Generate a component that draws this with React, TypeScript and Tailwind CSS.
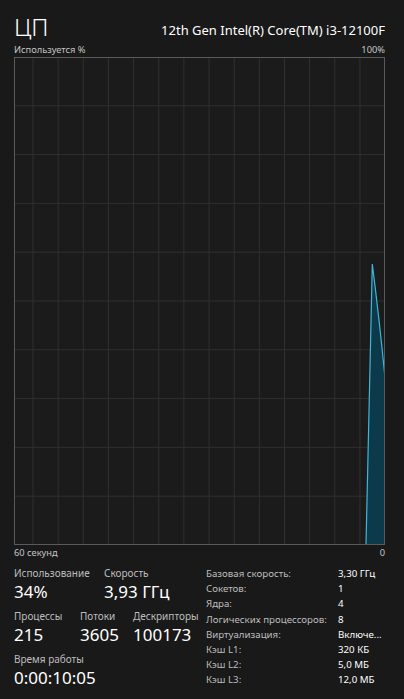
import React from 'react';

const W = 371;
const H = 488;

const vLines = Array.from({ length: 14 }, (_, i) => 19 + i * 25.15);
const hLines = Array.from({ length: 9 }, (_, i) => (i + 1) * (H / 10));

function UsageGraph() {
  const line = `M352 ${H} L358.3 207 Q366 268 ${W} 321`;
  const area = `${line} L${W} ${H} Z`;
  return (
    <svg width={W} height={H} viewBox={`0 0 ${W} ${H}`} className="block">
      <rect x="0" y="0" width={W} height={H} fill="#1b1b1b" />
      {vLines.map((x) => (
        <line key={`v${x}`} x1={x} y1="0" x2={x} y2={H} stroke="#303030" strokeWidth="1" />
      ))}
      {hLines.map((y) => (
        <line key={`h${y}`} x1="0" y1={y} x2={W} y2={y} stroke="#303030" strokeWidth="1" />
      ))}
      <path d={area} fill="#0c3a4a" />
      <path d={line} fill="none" stroke="#41b6d6" strokeWidth="1.2" />
      <rect x="0.5" y="0.5" width={W - 1} height={H - 1} fill="none" stroke="#5a5a5a" strokeWidth="1" />
    </svg>
  );
}

function Stat({ label, value }: { label: string; value: string }) {
  return (
    <div className="flex flex-col whitespace-nowrap">
      <span className="text-[10px] leading-[16px] text-[#bdbdbd]">{label}</span>
      <span className="text-[17px] leading-[22px] text-white">{value}</span>
    </div>
  );
}

const details: [string, string][] = [
  ['Базовая скорость:', '3,30 ГГц'],
  ['Сокетов:', '1'],
  ['Ядра:', '4'],
  ['Логических процессоров:', '8'],
  ['Виртуализация:', 'Включе...'],
  ['Кэш L1:', '320 КБ'],
  ['Кэш L2:', '5,0 МБ'],
  ['Кэш L3:', '12,0 МБ'],
];

export default function App() {
  return (
    <div
      className="h-[699px] w-full overflow-hidden bg-[#191919] pl-[14px] pr-[19px] text-white"
      style={{ fontFamily: '"Segoe UI", "Noto Sans", sans-serif' }}
    >
      <div className="flex items-end justify-between pt-[15px]">
        <span className="text-[24px] leading-[24px] font-light">ЦП</span>
        <span className="text-[13px] leading-[18px]">12th Gen Intel(R) Core(TM) i3-12100F</span>
      </div>
      <div className="flex justify-between text-[9.3px] leading-[12px] text-[#c4c4c4] mt-[5px]">
        <span>Используется %</span>
        <span>100%</span>
      </div>
      <div className="mt-[1px]">
        <UsageGraph />
      </div>
      <div className="flex justify-between text-[9.3px] leading-[14px] text-[#c4c4c4] mt-[1px]">
        <span>60 секунд</span>
        <span>0</span>
      </div>

      <div className="flex mt-[5px]">
        <div className="flex flex-col gap-[5px] w-[192px]">
          <div className="flex gap-[18px]">
            <div className="w-[72px]">
              <Stat label="Использование" value="34%" />
            </div>
            <Stat label="Скорость" value="3,93 ГГц" />
          </div>
          <div className="flex">
            <div className="w-[66px]">
              <Stat label="Процессы" value="215" />
            </div>
            <div className="w-[53px]">
              <Stat label="Потоки" value="3605" />
            </div>
            <Stat label="Дескрипторы" value="100173" />
          </div>
          <Stat label="Время работы" value="0:00:10:05" />
        </div>

        <div className="flex flex-col text-[9.7px] leading-[15.2px] pt-[1px] whitespace-nowrap">
          {details.map(([k, v]) => (
            <div key={k} className="flex">
              <span className="w-[132px] text-[#bdbdbd]">{k}</span>
              <span className="text-white">{v}</span>
            </div>
          ))}
        </div>
      </div>
    </div>
  );
}
